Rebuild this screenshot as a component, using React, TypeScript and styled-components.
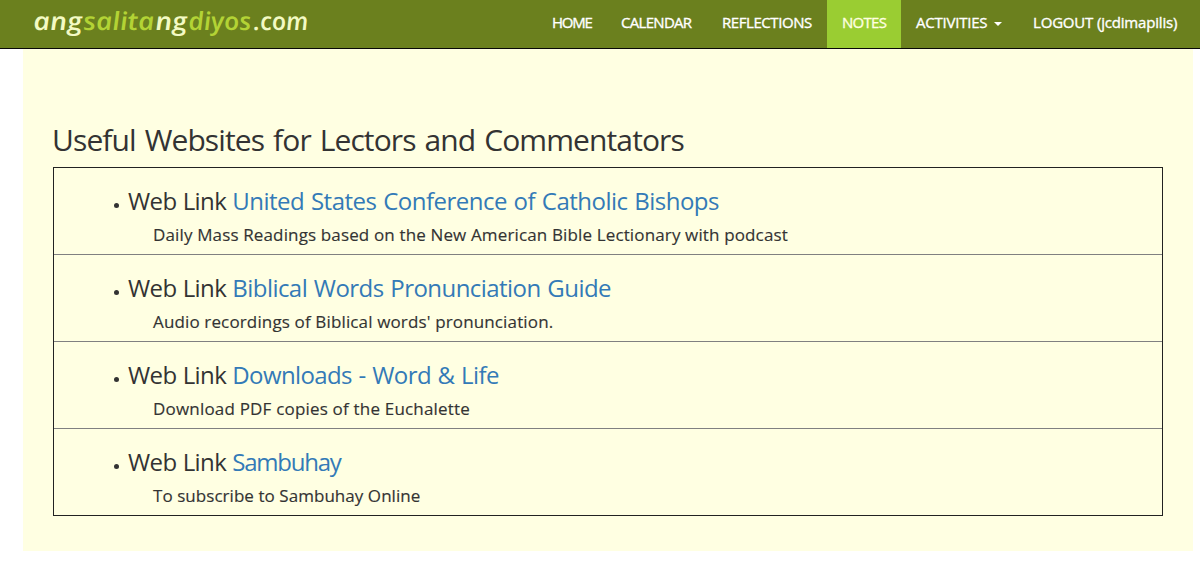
import React from "react";
import styled, { createGlobalStyle } from "styled-components";

const GlobalStyle = createGlobalStyle`
  * { box-sizing: border-box; }
  body {
    margin: 0;
    background: #fff;
    color: #333;
    font-family: "Trebuchet MS", "Open Sans", sans-serif;
  }
`;

const Navbar = styled.header`
  display: flex;
  justify-content: space-between;
  height: 49px;
  padding: 0 7px 0 30px;
  background: #6b801e;
  border-bottom: 1px solid #080808;
`;

const Logo = styled.svg`
  display: block;
  width: 290px;
  height: 48px;
  font: italic 600 25px "Open Sans", sans-serif;
`;

const Menu = styled.nav`
  display: flex;
`;

const MenuItem = styled.a<{ $width: number; $spacing: number; $active?: boolean }>`
  display: flex;
  align-items: center;
  width: ${(p) => p.$width}px;
  height: 48px;
  padding: 0 0 5px 15px;
  background: ${(p) => (p.$active ? "#9acd32" : "transparent")};
  color: ${(p) => (p.$active ? "#ffffe0" : "#fff")};
  font-size: 15px;
  letter-spacing: ${(p) => p.$spacing}px;
  white-space: nowrap;
  text-decoration: none;
  -webkit-text-stroke: 0.35px currentColor;
`;

const Caret = styled.span`
  margin: 5px 0 0 7px;
  border-top: 4px solid currentColor;
  border-left: 4px solid transparent;
  border-right: 4px solid transparent;
`;

const Page = styled.main`
  width: 1170px;
  height: 502px;
  margin-left: 23px;
  padding: 71px 30px 0;
  background: #ffffe2;
`;

const Title = styled.h2`
  height: 47px;
  margin: 0;
  font-size: 30px;
  font-weight: 400;
  line-height: 40px;
  letter-spacing: -0.89px;
  word-spacing: 2px;
  text-indent: -1px;
`;

const Links = styled.ul`
  margin: 0;
  padding: 0;
  list-style: none;
  border: 1px solid #222;
`;

const LinkRow = styled.li`
  height: 87px;
  padding: 16px 0 0 60px;
  border-bottom: 1px solid #808080;

  &:last-child {
    height: 86px;
    border-bottom: 0;
  }
`;

const LinkHeading = styled.h3`
  display: flex;
  align-items: center;
  height: 34px;
  margin: 0;
  font-size: 24px;
  font-weight: 400;
  line-height: 34px;
  white-space: pre;
`;

const Bullet = styled.span`
  width: 5px;
  height: 5px;
  margin: 9px 9px 0 0;
  border-radius: 50%;
  background: #333;
`;

const Kind = styled.span`
  letter-spacing: -0.6px;
  word-spacing: 0.5px;
`;

const SiteLink = styled.a<{ $spacing: number }>`
  color: #337ab7;
  letter-spacing: ${(p) => p.$spacing}px;
  word-spacing: 1px;
  text-decoration: none;
`;

const Description = styled.p<{ $spacing: number }>`
  margin: 1px 0 0 39px;
  font-size: 17px;
  line-height: 32px;
  letter-spacing: ${(p) => p.$spacing}px;
  -webkit-text-stroke: 0.15px currentColor;
`;

const logoParts = [
  { text: "ang", x: 4, length: 49, fill: "#f3fac4" },
  { text: "salita", x: 54, length: 71, fill: "#b3d335" },
  { text: "ng", x: 126, length: 32, fill: "#f3fac4" },
  { text: "diyos", x: 159, length: 63, fill: "#b3d335" },
  { text: ".com", x: 224, length: 55, fill: "#f3fac4" },
];

const menu = [
  { label: "HOME", width: 69, spacing: -1.25 },
  { label: "CALENDAR", width: 101, spacing: -0.7 },
  { label: "REFLECTIONS", width: 120, spacing: -0.43 },
  { label: "NOTES", width: 74, spacing: -0.7 },
  { label: "ACTIVITIES", width: 117, spacing: -0.22, caret: true },
  { label: "LOGOUT (jcdimapilis)", width: 175, spacing: -0.18 },
];

const activeLabel = "NOTES";

const sites = [
  {
    name: "United States Conference of Catholic Bishops",
    spacing: -0.51,
    description: "Daily Mass Readings based on the New American Bible Lectionary with podcast",
    descriptionSpacing: 0.14,
  },
  {
    name: "Biblical Words Pronunciation Guide",
    spacing: -0.55,
    description: "Audio recordings of Biblical words' pronunciation.",
    descriptionSpacing: 0.14,
  },
  {
    name: "Downloads - Word & Life",
    spacing: -0.61,
    description: "Download PDF copies of the Euchalette",
    descriptionSpacing: 0.19,
  },
  {
    name: "Sambuhay",
    spacing: -1.25,
    description: "To subscribe to Sambuhay Online",
    descriptionSpacing: 0.05,
  },
];

export default function App() {
  return (
    <>
      <GlobalStyle />
      <Navbar>
        <Logo viewBox="0 0 290 48">
          <g transform="translate(0 29.5) skewX(6)">
            {logoParts.map((part) => (
              <text
                key={part.text}
                x={part.x}
                y={0}
                fill={part.fill}
                textLength={part.length}
                lengthAdjust="spacingAndGlyphs"
              >
                {part.text}
              </text>
            ))}
          </g>
        </Logo>
        <Menu>
          {menu.map((item) => (
            <MenuItem
              key={item.label}
              $width={item.width}
              $spacing={item.spacing}
              $active={item.label === activeLabel}
            >
              {item.label}
              {item.caret && <Caret />}
            </MenuItem>
          ))}
        </Menu>
      </Navbar>
      <Page>
        <Title>Useful Websites for Lectors and Commentators</Title>
        <Links>
          {sites.map((site) => (
            <LinkRow key={site.name}>
              <LinkHeading>
                <Bullet />
                <Kind>{"Web Link "}</Kind>
                <SiteLink $spacing={site.spacing}>{site.name}</SiteLink>
              </LinkHeading>
              <Description $spacing={site.descriptionSpacing}>{site.description}</Description>
            </LinkRow>
          ))}
        </Links>
      </Page>
    </>
  );
}
